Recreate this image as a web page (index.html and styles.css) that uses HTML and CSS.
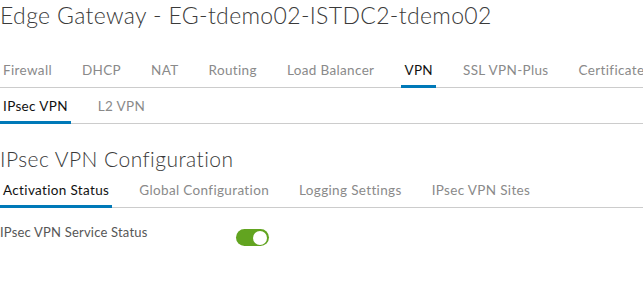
FILE: index.html
```html
<!DOCTYPE html>
<html lang="en">
<head>
  <meta charset="UTF-8">
  <title>Edge Gateway - EG-tdemo02-ISTDC2-tdemo02</title>
  <link rel="stylesheet" href="styles.css">
</head>
<body>

  <div class="page">
    <h1 class="title">Edge Gateway - EG-tdemo02-ISTDC2-tdemo02</h1>

    <nav class="tabs main-tabs">
      <a class="tab">Firewall</a>
      <a class="tab">DHCP</a>
      <a class="tab">NAT</a>
      <a class="tab">Routing</a>
      <a class="tab">Load Balancer</a>
      <a class="tab active">VPN</a>
      <a class="tab">SSL VPN-Plus</a>
      <a class="tab">Certificates</a>
    </nav>

    <nav class="tabs sub-tabs">
      <a class="tab active">IPsec VPN</a>
      <a class="tab">L2 VPN</a>
    </nav>

    <h2 class="section-title">IPsec VPN Configuration</h2>

    <nav class="tabs config-tabs">
      <a class="tab active">Activation Status</a>
      <a class="tab">Global Configuration</a>
      <a class="tab">Logging Settings</a>
      <a class="tab">IPsec VPN Sites</a>
    </nav>

    <div class="form-row">
      <label class="form-label" for="vpnStatus">IPsec VPN Service Status</label>
      <label class="toggle">
        <input type="checkbox" id="vpnStatus" checked>
        <span class="slider"></span>
      </label>
    </div>
  </div>

</body>
</html>
```

FILE: styles.css
```css
/* — General — */
* { box-sizing: border-box; margin: 0; padding: 0; }
body {
  font-family: Lato, 'Open Sans', sans-serif;
  background: #fff;
  color: #333;
}

.page {
  width: 643px;
  overflow: hidden;
}

/* — Page title — */
.title {
  font-size: 23px;
  font-weight: 300;
  letter-spacing: 0.35px;
  line-height: 31px;
  color: #3a3a3a;
  white-space: nowrap;
}

/* — Tabs — */
.tabs {
  display: flex;
  gap: 24px;
  box-shadow: inset 0 -1px 0 #ccc;
  white-space: nowrap;
}
.tab {
  display: block;
  padding: 0 3px;
  font-size: 13.5px;
  letter-spacing: 0.35px;
  line-height: 36px;
  color: #8a8a8a;
  cursor: pointer;
}
.tab.active {
  color: #111;
  box-shadow: inset 0 -3px 0 #0079b8;
}
.main-tabs { margin-top: 21px; }

/* — Section — */
.section-title {
  margin-top: 22px;
  font-size: 21px;
  font-weight: 300;
  letter-spacing: 0.45px;
  line-height: 26px;
  color: #3a3a3a;
}

/* — Form row — */
.form-row {
  display: flex;
  align-items: flex-start;
  margin-top: 16px;
}
.form-label {
  width: 236px;
  font-size: 13px;
  letter-spacing: 0.2px;
  line-height: 16px;
  color: #565656;
}

/* — Toggle switch — */
.toggle {
  position: relative;
  display: block;
  width: 33px;
  height: 17px;
  margin-top: 5px;
}
.toggle input { display: none; }
.slider {
  position: absolute;
  inset: 0;
  border-radius: 9px;
  background: #ccc;
}
.slider::after {
  content: '';
  position: absolute;
  top: 1.5px;
  left: 1.5px;
  width: 14px;
  height: 14px;
  border-radius: 50%;
  background: #fff;
}
.toggle input:checked + .slider { background: #62a420; }
.toggle input:checked + .slider::after { left: 17px; }
```
